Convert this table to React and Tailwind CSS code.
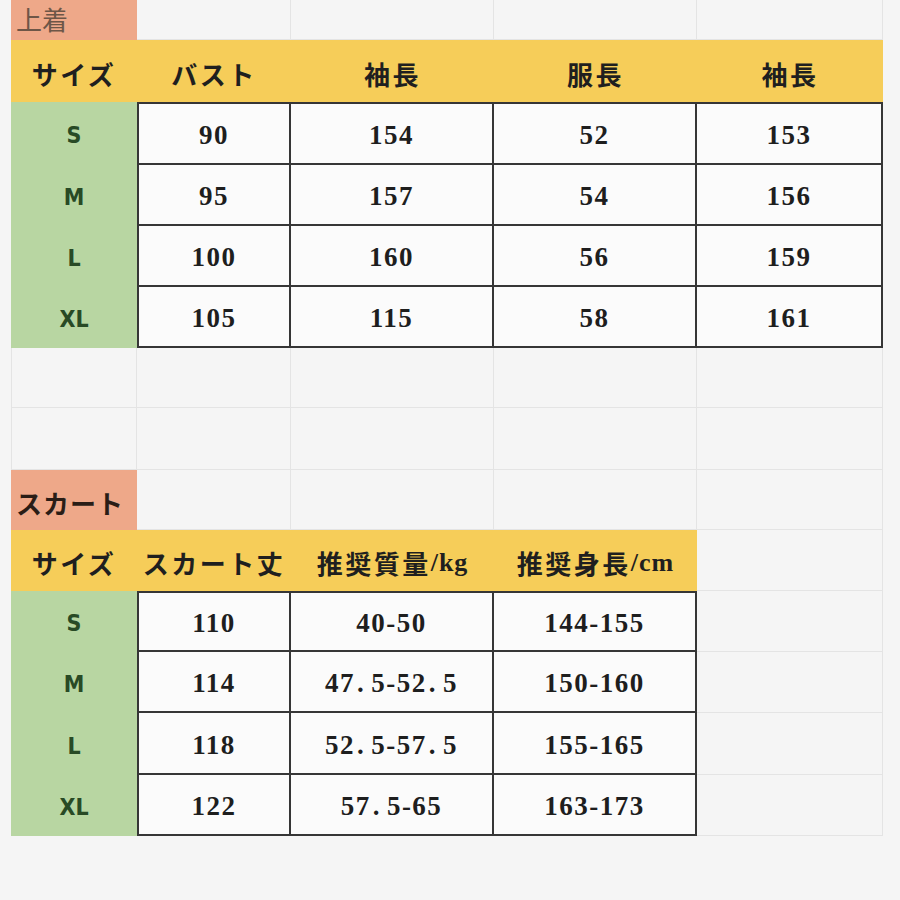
import React from "react";

const W = ["w-[126px]", "w-[154px]", "w-[203px]", "w-[203px]", "w-[186px]"];
const JP = "[font-family:'Noto_Sans_CJK_JP','Noto_Sans_CJK_SC',sans-serif]";
const NUM = "[font-family:'Liberation_Serif',serif] font-bold text-[27px] tracking-[1.5px] text-[#1e1e1e]";
const SZ = "[font-family:'Liberation_Sans_Narrow','DejaVu_Sans_Condensed',sans-serif] font-bold text-[23px] text-[#284a25]";
const HEAD = `${JP} font-bold text-[26px] tracking-[2.5px] text-[#1f1f1f]`;

function Row({ h, children }) {
  return <div className={`flex ${h}`}>{children}</div>;
}

function Empty({ w, first }) {
  return (
    <div
      className={`${w} h-full shrink-0 border-r border-b border-[#e4e4e4] ${first ? "border-l" : ""}`}
    />
  );
}

function Salmon({ children, dark }) {
  return (
    <div
      className={`w-[126px] h-full shrink-0 bg-[#eea889] flex items-center pl-[5px] ${JP} text-[26px] ${
        dark ? "font-bold tracking-[1px] text-[#2a1d16] pt-1" : "text-[#6d5647] pb-1"
      }`}
    >
      {children}
    </div>
  );
}

function Yellow({ w, children }) {
  return (
    <div className={`${w} h-full shrink-0 bg-[#f6cd59] flex items-center justify-center pt-1 ${HEAD}`}>
      {children}
    </div>
  );
}

function Green({ children }) {
  return (
    <div className={`w-[126px] h-full shrink-0 bg-[#b8d6a2] flex items-center justify-center pt-1 ${SZ}`}>
      {children}
    </div>
  );
}

function Num({ v }) {
  const parts = v.split(".");
  return (
    <span>
      {parts.map((p, i) => (
        <React.Fragment key={i}>
          {i > 0 && <span className="ml-[2px] mr-[6px]">.</span>}
          {p}
        </React.Fragment>
      ))}
    </span>
  );
}

function Data({ w, first, top, children }) {
  return (
    <div
      className={`${w} h-full shrink-0 bg-[#fbfbfb] border-r-2 border-b-2 border-[#363636] ${first ? "border-l-2" : ""} ${
        top ? "border-t-2" : ""
      } flex items-center justify-center pt-1 ${NUM}`}
    >
      {children}
    </div>
  );
}

const topRows = [
  ["S", "90", "154", "52", "153"],
  ["M", "95", "157", "54", "156"],
  ["L", "100", "160", "56", "159"],
  ["XL", "105", "115", "58", "161"],
];
const topH = ["h-[63px]", "h-[61px]", "h-[61px]", "h-[61px]"];

const skirtRows = [
  ["S", "110", "40-50", "144-155"],
  ["M", "114", "47.5-52.5", "150-160"],
  ["L", "118", "52.5-57.5", "155-165"],
  ["XL", "122", "57.5-65", "163-173"],
];
const skirtH = ["h-[61px]", "h-[61px]", "h-[62px]", "h-[61px]"];

const SERIF = "[font-family:'Liberation_Serif',serif] tracking-[1px]";

export default function App() {
  return (
    <div className="w-[900px] h-[900px] bg-[#f5f5f5] pl-[11px] overflow-hidden">
      <Row h="h-[40px]">
        <Salmon>上着</Salmon>
        <Empty w={W[1]} />
        <Empty w={W[2]} />
        <Empty w={W[3]} />
        <Empty w={W[4]} />
      </Row>
      <Row h="h-[62px]">
        <Yellow w={W[0]}>サイズ</Yellow>
        <Yellow w={W[1]}>バスト</Yellow>
        <Yellow w={W[2]}>袖長</Yellow>
        <Yellow w={W[3]}>服長</Yellow>
        <Yellow w={W[4]}>袖長</Yellow>
      </Row>
      {topRows.map((r, i) => (
        <Row key={r[0]} h={topH[i]}>
          <Green>{r[0]}</Green>
          {r.slice(1).map((v, j) => (
            <Data key={j} w={W[j + 1]} first={j === 0} top={i === 0}>
              {v}
            </Data>
          ))}
        </Row>
      ))}
      <Row h="h-[60px]">
        <Empty w={W[0]} first />
        <Empty w={W[1]} />
        <Empty w={W[2]} />
        <Empty w={W[3]} />
        <Empty w={W[4]} />
      </Row>
      <Row h="h-[62px]">
        <Empty w={W[0]} first />
        <Empty w={W[1]} />
        <Empty w={W[2]} />
        <Empty w={W[3]} />
        <Empty w={W[4]} />
      </Row>
      <Row h="h-[60px]">
        <Salmon dark>スカート</Salmon>
        <Empty w={W[1]} />
        <Empty w={W[2]} />
        <Empty w={W[3]} />
        <Empty w={W[4]} />
      </Row>
      <Row h="h-[61px]">
        <Yellow w={W[0]}>サイズ</Yellow>
        <Yellow w={W[1]}>スカート丈</Yellow>
        <Yellow w={W[2]}>
          推奨質量<span className={SERIF}>/kg</span>
        </Yellow>
        <Yellow w={W[3]}>
          推奨身長<span className={SERIF}>/cm</span>
        </Yellow>
        <Empty w={W[4]} />
      </Row>
      {skirtRows.map((r, i) => (
        <Row key={r[0]} h={skirtH[i]}>
          <Green>{r[0]}</Green>
          {r.slice(1).map((v, j) => (
            <Data key={j} w={W[j + 1]} first={j === 0} top={i === 0}>
              <Num v={v} />
            </Data>
          ))}
          <Empty w={W[4]} />
        </Row>
      ))}
    </div>
  );
}
